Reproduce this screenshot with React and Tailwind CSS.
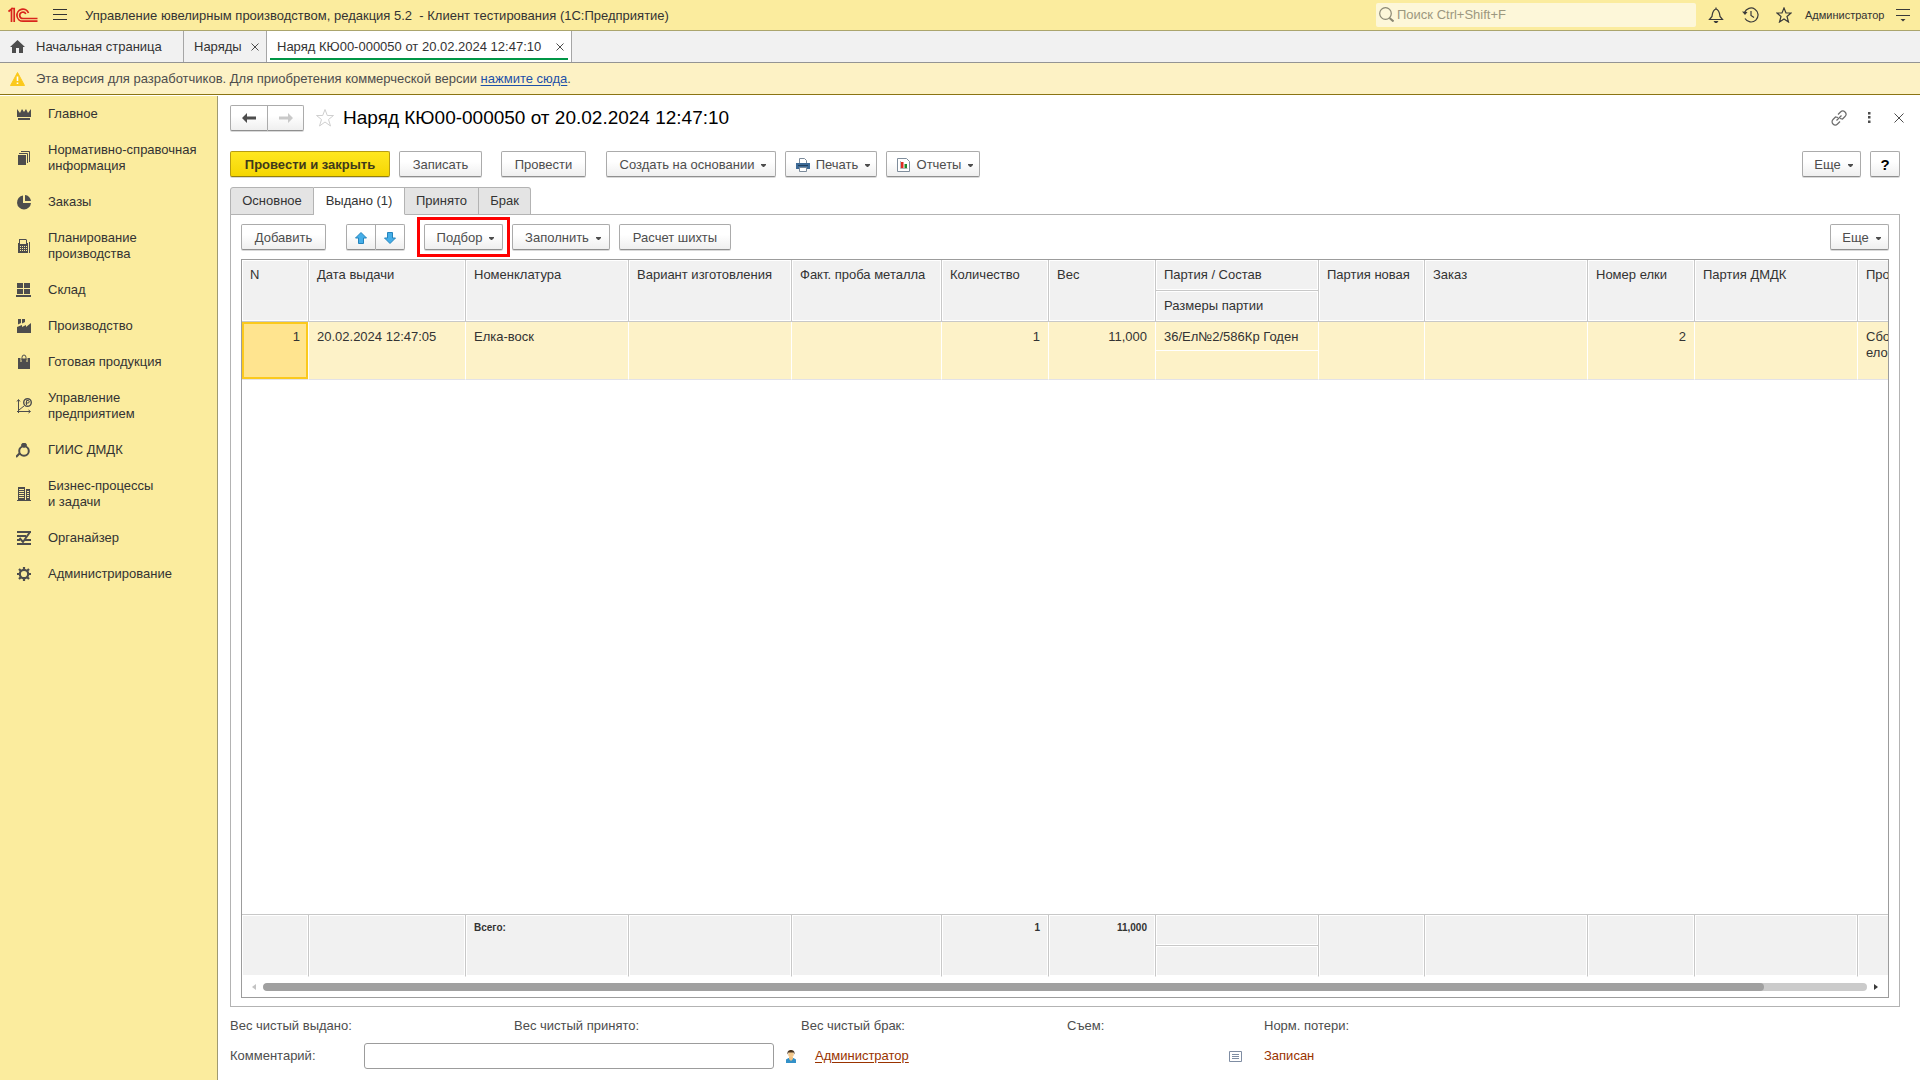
import React from 'react';

const BTN =
  'flex h-[26px] shrink-0 items-center justify-center rounded-[2px] border border-[#ababab] border-b-[#8f8f8f] bg-linear-to-b from-white from-40% to-[#efefef] pt-px text-[#4d4d4d] shadow-[0_1px_0_#d9d9d9]';

const Caret = () => (
  <svg width="5" height="3" viewBox="0 0 5 3" className="mt-0.5 ml-[7px] shrink-0">
    <path d="M0 0h5v1L3 3H2L0 1z" fill="#4d4d4d" />
  </svg>
);

const Button = ({ width, children, caret }) => (
  <button type="button" className={`${BTN} ${width} ${caret ? 'pl-1' : ''}`}>
    {children}
    {caret && <Caret />}
  </button>
);

// Sidebar glyphs, all on a 16x16 grid
const glyphs = {
  crown: (
    <>
      <path d="M1 3l3 4 2-4 2 3 2-3 2 4 3-4v8H1z" />
      <path d="M2 12h12v2H2z" />
    </>
  ),
  docs: (
    <>
      <path d="M2 5h8v10H2z" />
      <path d="M3 3.500h8.500V13M5 1.500h8.500V12" fill="none" stroke="#4d4d4d" />
    </>
  ),
  pie: (
    <>
      <path d="M7 1.500V9h8A7 7 0 1 1 7 1.500z" />
      <path d="M9 1a6.500 6.500 0 0 1 6 6H9z" />
    </>
  ),
  calc: (
    <>
      <path
        fillRule="evenodd"
        d="M3 5V1h7l1 1v3h1v10H2V5zM4 2v4h6V2zM4 8v1h1V8zm2 0v1h1V8zm2 0v1h1V8zm2 0v1h1V8zm-6 2v1h1v-1zm2 0v1h1v-1zm2 0v1h1v-1zm2 0v1h1v-1zm-6 2v1h1v-1zm2 0v1h1v-1zm2 0v1h1v-1zm2 0v1h1v-1z"
      />
      <path d="M13 4h1v11h-1z" />
    </>
  ),
  store: <path d="M1 1h6v5H1zM8 1h6v5H8zM1 7h6v5H1zM8 7h6v5H8zM0 13h15v2H0z" />,
  factory: (
    <>
      <path d="M1 9l5-2v2l4-2v2l5-4v10H1z" />
      <path d="M2 1h3v4L2 6.500zM6 1h3v3L6 5.500z" />
    </>
  ),
  bag: (
    <>
      <path d="M2 4h12v11H2z" />
      <path d="M5 8V4h6v4" fill="none" stroke="#fbec9e" strokeWidth="1" />
      <path d="M6 6V3.500a2 2.500 0 0 1 4 0V6" fill="none" stroke="#4d4d4d" />
    </>
  ),
  chart: (
    <>
      <path d="M2.500 15V2M1 13.500h13M1 3.500L2.500 1.500 4 3.500M12.500 12l2 1.500-2 1.500M3 12l5-4" fill="none" stroke="#4d4d4d" />
      <circle cx="11.500" cy="4.500" r="3.800" fill="none" stroke="#4d4d4d" strokeWidth="1.400" />
      <path d="M10.500 7V2.500h1.500a1.200 1.200 0 0 1 0 2.500H9.500" fill="none" stroke="#4d4d4d" />
    </>
  ),
  ring: (
    <>
      <path d="M5 2.500L6.500 1h3L11 2.500v1L8 6 5 3.500z" />
      <circle cx="8" cy="9" r="4.800" fill="none" stroke="#4d4d4d" strokeWidth="2" />
      <path d="M0 15l4-4" stroke="#4d4d4d" strokeWidth="2.200" />
    </>
  ),
  building: (
    <>
      <path d="M1 14h14v1H1z" />
      <path
        fillRule="evenodd"
        d="M2 1h7v13H2zM3 3v1h5V3zm0 2v1h5V5zm0 2v1h5V7zm0 2v1h5V9zm0 2v1h5v-1zM10 3h4v11h-4zM11 5v1h2V5zm0 2v1h2V7zm0 2v1h2V9zm0 2v1h2v-1z"
      />
    </>
  ),
  organizer: (
    <>
      <path d="M1 1h14v2H1zM1 5h9v2H1zM1 9h3v2H1zM9 9h6v2H9zM1 13h14v2H1z" />
      <path d="M3.500 8L7 12l7-10" fill="none" stroke="#4d4d4d" strokeWidth="2" />
    </>
  ),
  gear: (
    <>
      <circle cx="8" cy="8" r="4.200" fill="none" stroke="#4d4d4d" strokeWidth="2.200" />
      <path d="M8 1v3M8 12v3M1 8h3M12 8h3M3 3l2 2M11 11l2 2M13 3l-2 2M5 11l-2 2" stroke="#4d4d4d" strokeWidth="2.200" />
    </>
  ),
};

const sections = [
  { icon: 'crown', lines: ['Главное'] },
  { icon: 'docs', lines: ['Нормативно-справочная', 'информация'] },
  { icon: 'pie', lines: ['Заказы'] },
  { icon: 'calc', lines: ['Планирование', 'производства'] },
  { icon: 'store', lines: ['Склад'] },
  { icon: 'factory', lines: ['Производство'] },
  { icon: 'bag', lines: ['Готовая продукция'] },
  { icon: 'chart', lines: ['Управление', 'предприятием'] },
  { icon: 'ring', lines: ['ГИИС ДМДК'] },
  { icon: 'building', lines: ['Бизнес-процессы', 'и задачи'] },
  { icon: 'organizer', lines: ['Органайзер'] },
  { icon: 'gear', lines: ['Администрирование'] },
];

const columns = [
  { title: 'N', width: 'w-[67px]', value: '1', num: true, selected: true },
  { title: 'Дата выдачи', width: 'w-[157px]', value: '20.02.2024 12:47:05' },
  { title: 'Номенклатура', width: 'w-[163px]', value: 'Елка-воск', total: 'Всего:' },
  { title: 'Вариант изготовления', width: 'w-[163px]' },
  { title: 'Факт. проба металла', width: 'w-[150px]' },
  { title: 'Количество', width: 'w-[107px]', value: '1', total: '1', num: true },
  { title: 'Вес', width: 'w-[107px]', value: '11,000', total: '11,000', num: true },
  { title: 'Партия / Состав', sub: 'Размеры партии', width: 'w-[163px]', value: '36/Ел№2/586Кр Годен' },
  { title: 'Партия новая', width: 'w-[106px]' },
  { title: 'Заказ', width: 'w-[163px]' },
  { title: 'Номер елки', width: 'w-[107px]', value: '2', num: true },
  { title: 'Партия ДМДК', width: 'w-[163px]' },
  { title: 'Процесс', width: 'w-[107px]', value: 'Сборка\nелок' },
];

const GREY_CELL =
  'border-r border-b border-[#c8c8c8] bg-[#f1f1f1] px-2 align-top shadow-[inset_0_0_0_1px_#fff]';
const ROW_CELL = 'border-r border-r-white px-2 pt-[7px] align-top whitespace-pre';

function TopBar() {
  return (
    <header className="flex h-[31px] shrink-0 items-center border-b border-[#aba56d] bg-[#fbec9e] pr-[10px]">
      <svg width="30" height="16" viewBox="0 0 30 16" className="ml-2 shrink-0" fill="none" stroke="#d9251c" strokeWidth="1.700">
        <path d="M0.500 4.500L3.500 2V15M3 1.500h3.200V15" />
        <path d="M20.500 6A6 6 0 1 0 15 14.200H29.500" />
        <path d="M17.800 7A3.200 3.200 0 1 0 15 11.500H29.500" />
      </svg>
      <button type="button" aria-label="Меню" className="ml-[15px] shrink-0">
        <svg width="14" height="12" viewBox="0 0 14 12" stroke="#333333">
          <path d="M0 0.500h14M0 5.500h14M0 10.500h14" />
        </svg>
      </button>
      <h1 className="ml-[18px] pt-px whitespace-pre">
        Управление ювелирным производством, редакция 5.2  - Клиент тестирования (1С:Предприятие)
      </h1>
      <label className="mr-[12px] mb-[1px] ml-auto flex h-6 w-[320px] items-center gap-[3px] rounded-[2px] bg-[#fdf7d9] pl-[3px]">
        <svg width="15" height="15" viewBox="0 0 15 15" fill="none" stroke="#8b8874" strokeWidth="1.200">
          <circle cx="6.500" cy="6.500" r="5.800" />
          <path d="M10.500 11l4 3.500" strokeWidth="2" />
        </svg>
        <input
          type="search"
          aria-label="Поиск"
          placeholder="Поиск Ctrl+Shift+F"
          className="min-w-0 flex-1 bg-transparent outline-none placeholder:text-[#9c987f]"
        />
      </label>
      <div className="flex items-center">
        <button type="button" aria-label="Уведомления" className="mr-[18px]">
          <svg width="16" height="16" viewBox="0 0 16 16" fill="none" stroke="#3a3a3a" strokeWidth="1.200">
            <path d="M1.500 12.500h13l-2.500-3C11.500 6 11.500 3 8 2 4.500 3 4.500 6 4 9.500zM8 0.500V2" />
            <path d="M5.500 14h5L9 16H7z" fill="#3a3a3a" stroke="none" />
          </svg>
        </button>
        <button type="button" aria-label="История" className="mr-[17px]">
          <svg width="17" height="16" viewBox="0 0 17 16" fill="none" stroke="#3a3a3a" strokeWidth="1.200">
            <path d="M2.500 5.500A7 7 0 1 1 3 11.500M9 4v4.500l3 2" />
            <path d="M0 4.500l5.500 0.500L3 8z" fill="#3a3a3a" stroke="none" />
          </svg>
        </button>
        <button type="button" aria-label="Избранное" className="mr-[13px]">
          <svg width="16" height="16" viewBox="0 0 16 16" fill="none" stroke="#3a3a3a" strokeWidth="1.200">
            <path d="M8 1l2 5h5l-4 3.500 1.500 5.500L8 12l-4.500 3L5 9.500 1 6h5z" />
          </svg>
        </button>
        <span className="mr-[14px] w-[77px] text-[11px]">Администратор</span>
        <button type="button" aria-label="Сервис">
          <svg width="14" height="14" viewBox="0 0 14 14" stroke="#3a3a3a">
            <path d="M0 1.500h14M0 7.500h14" />
            <path d="M4.500 11h5L7 13.500z" fill="#3a3a3a" stroke="none" />
          </svg>
        </button>
      </div>
    </header>
  );
}

const CloseMark = () => (
  <svg width="8" height="8" viewBox="0 0 8 8" stroke="#4d4d4d">
    <path d="M0.500 0.500l7 7M7.500 0.500l-7 7" />
  </svg>
);

function WindowTabs() {
  return (
    <nav className="flex h-8 shrink-0 border-b border-[#949494] bg-[#f1f1f1]">
      <a href="#home" className="flex w-[184px] items-center gap-[11px] border-r border-[#a6a6a6] pl-[10px]">
        <svg width="15" height="13" viewBox="0 0 15 13" fill="#4d4d4d">
          <path d="M7.500 0L15 7h-2v6H9V8H6v5H2V7H0z" />
        </svg>
        Начальная страница
      </a>
      <div className="flex w-[83px] items-center justify-between border-r border-[#a6a6a6] pr-[7px] pl-[10px]">
        <a href="#orders">Наряды</a>
        <button type="button" aria-label="Закрыть Наряды"><CloseMark /></button>
      </div>
      <div className="flex w-[305px] flex-col border-r border-[#a6a6a6] bg-white px-[3px] pb-[2px]">
        <div className="flex flex-1 items-center justify-between border-b-2 border-[#009646] pt-1 pr-1 pl-[7px]">
          <a href="#order" className="whitespace-nowrap">Наряд КЮ00-000050 от 20.02.2024 12:47:10</a>
          <button type="button" aria-label="Закрыть Наряд"><CloseMark /></button>
        </div>
      </div>
    </nav>
  );
}

function Warning() {
  return (
    <div className="flex h-8 shrink-0 items-center border-b border-[#8b7413] bg-[#fdf2c5] text-[#4d4d4d]">
      <svg width="15" height="14" viewBox="0 0 15 14" className="mr-[11px] ml-[10px]">
        <path d="M7.500 0.500L14.500 13.500H0.500z" fill="#fbc91d" stroke="#fbc91d" strokeLinejoin="round" />
        <path d="M7.500 4.500v4.500M7.500 10.500v1.500" stroke="#fff" strokeWidth="1.600" />
      </svg>
      <p>
        Эта версия для разработчиков. Для приобретения коммерческой версии{' '}
        <a href="#buy" className="text-[#1d50a8] underline underline-offset-2">нажмите сюда</a>.
      </p>
    </div>
  );
}

function Sidebar() {
  return (
    <aside className="mt-px w-[218px] shrink-0 border-r border-[#a09a70] bg-[#fbec9e]">
      {sections.map((s) => (
        <a key={s.icon} href={`#${s.icon}`} className="flex items-center gap-4 py-[10px] pl-4">
          <svg width="16" height="16" viewBox="0 0 16 16" fill="#4d4d4d" className="shrink-0">
            {glyphs[s.icon]}
          </svg>
          <span className="whitespace-pre-line">{s.lines.join('\n')}</span>
        </a>
      ))}
    </aside>
  );
}

const Arrow = ({ color, flip }) => (
  <svg width="14" height="10" viewBox="0 0 14 10" className={flip ? 'rotate-180' : ''} fill={color}>
    <path d="M0 5l5-5v3.500h9v3H5V10z" />
  </svg>
);

const MoveArrow = ({ down }) => (
  <svg width="12" height="12" viewBox="0 0 12 12" className={down ? 'rotate-180' : ''}>
    <path d="M6 0.500L11.500 6H8.500v5.500h-5V6H0.500z" fill="#45aee8" stroke="#2584bd" />
  </svg>
);

function FormTitle() {
  return (
    <div className="flex h-[25px] items-center">
      <div className="flex">
        <button type="button" aria-label="Назад" className={`${BTN} w-[38px] rounded-r-none`}>
          <Arrow color="#4d4d4d" />
        </button>
        <button type="button" aria-label="Вперед" className={`${BTN} w-9 rounded-l-none border-l-0`}>
          <Arrow color="#c9c9c9" flip />
        </button>
      </div>
      <svg width="20" height="20" viewBox="0 0 20 20" className="ml-[11px]" fill="none" stroke="#cfcfcf">
        <path d="M10 1.500l2.300 6h6.200l-5 4 2 6.500-5.500-4-5.500 4 2-6.500-5-4h6.200z" />
      </svg>
      <h2 className="ml-2 text-[19px] leading-6 text-black">Наряд КЮ00-000050 от 20.02.2024 12:47:10</h2>
      <div className="mr-[-7px] ml-auto flex items-center">
        <button type="button" aria-label="Ссылка" className="mr-[14px]">
          <svg width="16" height="16" viewBox="0 0 16 16" fill="none" stroke="#6b6b6b" strokeWidth="1.200">
            <path d="M7 4.500l2.500-2.500a3 3 0 0 1 4.500 4.500L11.500 9 9 8.500M9 11.500l-2.500 2.500A3 3 0 0 1 2 9.500L4.500 7 7 7.500M5.500 10.500l5-5" />
          </svg>
        </button>
        <button type="button" aria-label="Еще действия" className="mr-[17px] flex w-4 justify-center">
          <svg width="3" height="11" viewBox="0 0 3 11" fill="#4d4d4d">
            <path d="M0 0h2.500v2.500H0zM0 4h2.500v2.500H0zM0 8.500h2.500V11H0z" />
          </svg>
        </button>
        <button type="button" aria-label="Закрыть" className="pr-[3px]">
          <svg width="10" height="10" viewBox="0 0 10 10" stroke="#4d4d4d">
            <path d="M0.500 0.500l9 9M9.500 0.500l-9 9" />
          </svg>
        </button>
      </div>
    </div>
  );
}

function CommandBar() {
  return (
    <div className="mt-[21px] flex items-center">
      <button
        type="button"
        className="mr-[9px] h-[26px] w-40 rounded-[2px] border border-[#b79c12] border-b-[#94800c] bg-linear-to-b from-[#ffe71f] to-[#f5d600] pt-px font-bold text-[#3f3a1a] shadow-[0_1px_0_#d9d9d9]"
      >
        Провести и закрыть
      </button>
      <Button width="mr-[19px] w-[83px]">Записать</Button>
      <Button width="mr-5 w-[85px]">Провести</Button>
      <Button width="mr-[9px] w-[170px]" caret>Создать на основании</Button>
      <Button width="mr-[9px] w-[92px]" caret>
        <svg width="14" height="14" viewBox="0 0 14 14" className="mr-[6px]">
          <path d="M3.500 5V0.500h5l2 2V5" fill="#fff" stroke="#7b8a9a" />
          <path d="M0 5h14v6H0z" fill="#3d6a96" />
          <path d="M2 7h10v1H2z" fill="#20405f" />
          <path d="M3.500 9.500h7v4h-7z" fill="#fff" stroke="#7b8a9a" />
        </svg>
        Печать
      </Button>
      <Button width="w-[94px]" caret>
        <svg width="13" height="14" viewBox="0 0 13 14" className="mr-[7px]">
          <path d="M0.500 0.500h9l3 3v10h-12z" fill="#fff" stroke="#7f8d9c" />
          <path d="M3.500 3v7.500h7" fill="none" stroke="#b5b5b5" />
          <path d="M4 4h2.500v6H4z" fill="#e02b20" />
          <path d="M7.500 6H10v4H7.500z" fill="#1e8a2c" />
        </svg>
        Отчеты
      </Button>
      <div className="ml-auto flex gap-[9px]">
        <Button width="w-[59px]" caret>Еще</Button>
        <button type="button" className={`${BTN} w-[30px] text-[15px] font-bold text-black`}>?</button>
      </div>
    </div>
  );
}

const formTabs = [
  { title: 'Основное', width: 'w-[84px]' },
  { title: 'Выдано (1)', width: 'w-[91px]', active: true },
  { title: 'Принято', width: 'w-[74px]' },
  { title: 'Брак', width: 'w-[52px]' },
];

function FormTabs() {
  return (
    <div role="tablist" className="relative z-10 mt-[10px] mb-[-1px] flex h-7">
      {formTabs.map((t) => (
        <button
          key={t.title}
          type="button"
          role="tab"
          aria-selected={!!t.active}
          className={`${t.width} border-t border-r border-b border-[#b3b3b3] first:rounded-tl-[3px] first:border-l last:rounded-tr-[3px] ${
            t.active ? 'border-b-white bg-white' : 'bg-[#e4e4e4]'
          }`}
        >
          {t.title}
        </button>
      ))}
    </div>
  );
}

function RowsBar() {
  return (
    <div className="flex items-center">
      <Button width="mr-5 w-[85px]">Добавить</Button>
      <button type="button" aria-label="Вверх" className={`${BTN} w-[30px] rounded-r-none`}><MoveArrow /></button>
      <button type="button" aria-label="Вниз" className={`${BTN} w-[29px] rounded-l-none border-l-0`}><MoveArrow down /></button>
      <div className="relative mr-[9px] ml-[19px]">
        <Button width="w-[79px]" caret>Подбор</Button>
        <div className="pointer-events-none absolute -inset-x-[7px] -inset-y-[7px] border-3 border-[#fe0000]" />
      </div>
      <Button width="mr-[9px] w-[98px]" caret>Заполнить</Button>
      <Button width="w-28">Расчет шихты</Button>
      <div className="ml-auto">
        <Button width="w-[59px]" caret>Еще</Button>
      </div>
    </div>
  );
}

function IssuedTable() {
  const split = columns.find((c) => c.sub);
  return (
    <div className="mt-[9px] flex min-h-0 flex-1 flex-col border border-[#9c9c9c]">
      <div className="min-h-0 flex-1 overflow-hidden">
        <table className="h-full w-[1723px] table-fixed border-separate border-spacing-0">
          <colgroup>
            {columns.map((c) => <col key={c.title} className={c.width} />)}
          </colgroup>
          <thead className="text-left">
            <tr className="h-[31px]">
              {columns.map((c) => (
                <th key={c.title} rowSpan={c.sub ? 1 : 2} className={`${GREY_CELL} pt-[7px] font-normal whitespace-nowrap`}>
                  {c.title}
                </th>
              ))}
            </tr>
            <tr className="h-[31px]">
              <th className={`${GREY_CELL} pt-[7px] font-normal`}>{split.sub}</th>
            </tr>
          </thead>
          <tbody>
            <tr className="h-[29px] bg-[#fdf2c8]">
              {columns.map((c) => (
                <td
                  key={c.title}
                  rowSpan={c.sub ? 1 : 2}
                  className={`${ROW_CELL} border-b ${c.sub ? 'border-b-white' : 'border-b-[#e2e2e8]'} ${c.num ? 'text-right' : ''} ${
                    c.selected ? 'bg-[#ffe48f] shadow-[inset_0_0_0_2px_#fbc91d]' : ''
                  }`}
                >
                  {c.value}
                </td>
              ))}
            </tr>
            <tr className="h-[29px] bg-[#fdf2c8]">
              <td className={`${ROW_CELL} border-b border-b-[#e2e2e8]`} />
            </tr>
            <tr>
              <td colSpan={columns.length} className="border-b border-[#c8c8c8]" />
            </tr>
          </tbody>
          <tfoot className="text-[10px] font-bold">
            <tr className="h-[31px]">
              {columns.map((c) => (
                <td
                  key={c.title}
                  rowSpan={c.sub ? 1 : 2}
                  className={`${GREY_CELL} pt-[5px] ${c.sub ? '' : 'border-b-white'} ${c.num ? 'text-right' : ''}`}
                >
                  {c.total}
                </td>
              ))}
            </tr>
            <tr className="h-[31px]">
              <td className={`${GREY_CELL} border-b-white`} />
            </tr>
          </tfoot>
        </table>
      </div>
      <div className="flex h-5 shrink-0 items-center px-[10px]">
        <svg width="4" height="6" viewBox="0 0 4 6" fill="#c3c3c3"><path d="M4 0v6L0 3z" /></svg>
        <div className="mx-[7px] h-2 flex-1 overflow-hidden rounded-full bg-[#cbcbcb]">
          <div className="h-2 rounded-full bg-[#a0a0a0]" style={{ width: '93.6%' }} />
        </div>
        <svg width="4" height="6" viewBox="0 0 4 6" fill="#3a3a3a"><path d="M0 0v6l4-3z" /></svg>
      </div>
    </div>
  );
}

function FormFooter() {
  return (
    <footer className="pt-[11px] pb-[11px] text-[#4d4d4d]">
      <div className="flex h-4 items-center">
        <span className="w-[284px]">Вес чистый выдано:</span>
        <span className="w-[287px]">Вес чистый принято:</span>
        <span className="w-[266px]">Вес чистый брак:</span>
        <span className="w-[197px]">Съем:</span>
        <span>Норм. потери:</span>
      </div>
      <div className="mt-[9px] flex h-[26px] items-center">
        <label htmlFor="comment" className="w-[134px]">Комментарий:</label>
        <input id="comment" type="text" className="h-[26px] w-[410px] rounded-[3px] border border-[#9c9c9c] bg-white px-2 outline-none" />
        <svg width="10" height="13" viewBox="0 0 10 13" className="mr-[19px] ml-3">
          <path d="M0 13V9.500L2.500 8h5L10 9.500V13z" fill="#3391c8" />
          <path d="M3 7h4v2L5 11 3 9z" fill="#f0c283" />
          <circle cx="5" cy="4.500" r="2.800" fill="#f3c88c" />
          <path d="M1.500 4.500C1 1 3 0 5 0s4 1 3.500 4.500L7.500 2.500h-5z" fill="#4a3520" />
        </svg>
        <a href="#author" className="w-[414px] text-[#993300] underline underline-offset-2">Администратор</a>
        <svg width="13" height="11" viewBox="0 0 13 11" className="mr-[22px]" fill="none" stroke="#7f8da3">
          <path d="M0.500 0.500h12v10H0.500zM3 3.500h7M3 5.500h7M3 7.500h7" />
        </svg>
        <span className="text-[#993300]">Записан</span>
      </div>
    </footer>
  );
}

export default function App() {
  return (
    <div className="flex h-screen min-h-[700px] flex-col overflow-hidden bg-white font-['Liberation_Sans',Arial,sans-serif] text-[13px] leading-4 text-[#333333]">
      <TopBar />
      <WindowTabs />
      <Warning />
      <div className="flex min-h-0 flex-1">
        <Sidebar />
        <main className="flex min-w-0 flex-1 flex-col pt-[10px] pr-5 pl-3">
          <FormTitle />
          <CommandBar />
          <FormTabs />
          <section className="flex min-h-0 flex-1 flex-col border border-[#b3b3b3] px-[10px] pt-[9px] pb-2">
            <RowsBar />
            <IssuedTable />
          </section>
          <FormFooter />
        </main>
      </div>
    </div>
  );
}
